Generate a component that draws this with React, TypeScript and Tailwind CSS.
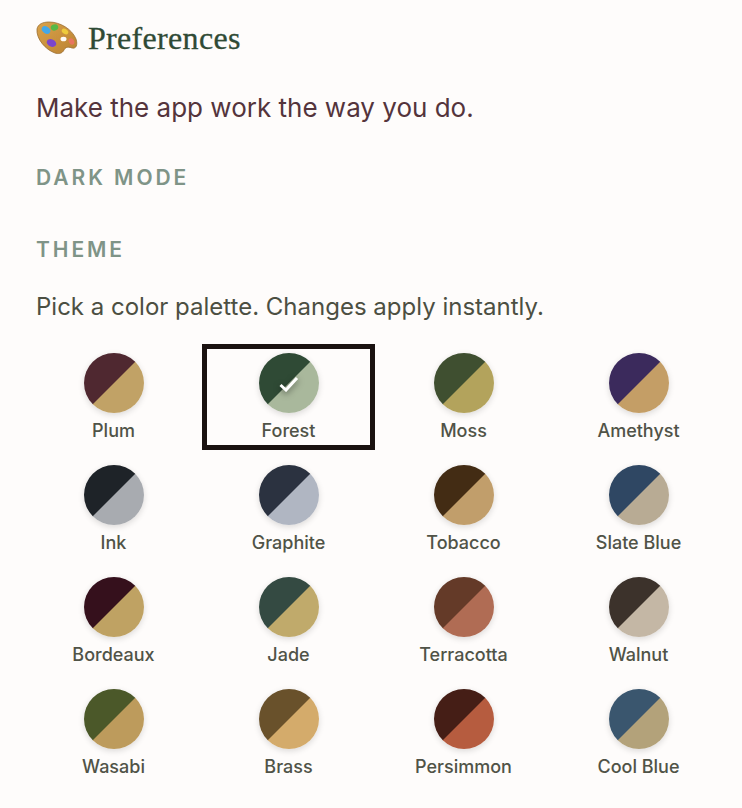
const themes = [
  { name: "Plum", swatch: "bg-[linear-gradient(135deg,#4f2830_49.6%,#c1a266_50.4%)]" },
  { name: "Forest", swatch: "bg-[linear-gradient(135deg,#2f4a35_49.6%,#a9b89c_50.4%)]", selected: true },
  { name: "Moss", swatch: "bg-[linear-gradient(135deg,#3f4f30_49.6%,#b3a35c_50.4%)]" },
  { name: "Amethyst", swatch: "bg-[linear-gradient(135deg,#3b2a5c_49.6%,#c49e66_50.4%)]" },
  { name: "Ink", swatch: "bg-[linear-gradient(135deg,#1e2328_49.6%,#a8abb0_50.4%)]" },
  { name: "Graphite", swatch: "bg-[linear-gradient(135deg,#2b3240_49.6%,#b0b6c2_50.4%)]" },
  { name: "Tobacco", swatch: "bg-[linear-gradient(135deg,#432c14_49.6%,#c19e6b_50.4%)]" },
  { name: "Slate Blue", swatch: "bg-[linear-gradient(135deg,#2f4763_49.6%,#b8ab94_50.4%)]" },
  { name: "Bordeaux", swatch: "bg-[linear-gradient(135deg,#35101c_49.6%,#bfa263_50.4%)]" },
  { name: "Jade", swatch: "bg-[linear-gradient(135deg,#344a42_49.6%,#c0aa6b_50.4%)]" },
  { name: "Terracotta", swatch: "bg-[linear-gradient(135deg,#643a28_49.6%,#b06c54_50.4%)]" },
  { name: "Walnut", swatch: "bg-[linear-gradient(135deg,#3c322b_49.6%,#c4b7a5_50.4%)]" },
  { name: "Wasabi", swatch: "bg-[linear-gradient(135deg,#4b5829_49.6%,#bd9b5c_50.4%)]" },
  { name: "Brass", swatch: "bg-[linear-gradient(135deg,#69512b_49.6%,#d4ab6b_50.4%)]" },
  { name: "Persimmon", swatch: "bg-[linear-gradient(135deg,#451e16_49.6%,#b65c3f_50.4%)]" },
  { name: "Cool Blue", swatch: "bg-[linear-gradient(135deg,#3a566e_49.6%,#b3a27a_50.4%)]" },
]

function PaletteIcon() {
  return (
    <svg width="42" height="34" viewBox="0 0 42 34" className="shrink-0">
      <defs>
        <linearGradient id="wood" x1="0" y1="0" x2="1" y2="1">
          <stop offset="0" stopColor="#d9a24a" />
          <stop offset="1" stopColor="#bb8232" />
        </linearGradient>
      </defs>
      <path
        d="M1 8C2 3 7 1 13 1C24 1 36 8 40 18C42 24 40 28 36 27C31 25 29 27 28 29C26 33 22 33 19 32C10 29 0 18 1 8z"
        fill="url(#wood)"
        stroke="#9a6f34"
        strokeWidth="0.8"
      />
      <ellipse cx="10" cy="9" rx="4.6" ry="3.4" fill="#43a8e8" transform="rotate(35 10 9)" />
      <ellipse cx="18.5" cy="6.5" rx="3.8" ry="3" fill="#57b947" transform="rotate(-15 18.5 6.5)" />
      <ellipse cx="29" cy="10.5" rx="3.6" ry="2.4" fill="#eecb3d" transform="rotate(35 29 10.5)" />
      <ellipse cx="35.5" cy="20.5" rx="2.6" ry="3.4" fill="#e9755f" transform="rotate(-30 35.5 20.5)" />
      <ellipse cx="15.5" cy="22" rx="5" ry="3.6" fill="#7b46cc" transform="rotate(25 15.5 22)" />
      <ellipse cx="27.5" cy="18" rx="3" ry="2.3" fill="#fefcfb" />
    </svg>
  )
}

export default function App() {
  return (
    <div className="min-h-[808px] bg-[#fefcfb] font-['Inter',sans-serif]">
      <div className="flex items-center gap-[10px] pl-[36px] pt-[20px]">
        <PaletteIcon />
        <h1 className="font-['Liberation_Serif',serif] text-[32px] leading-[36px] tracking-[0.01em] text-[#2f4a35] [-webkit-text-stroke:0.3px_#2f4a35]">
          Preferences
        </h1>
      </div>

      <p className="mt-[36px] pl-[36px] text-[26px] leading-[32px] text-[#54343c]">Make the app work the way you do.</p>

      <h2 className="mt-[40px] pl-[36px] text-[21px] leading-[28px] font-semibold tracking-[0.14em] text-[#7f9487]">
        DARK MODE
      </h2>
      <h2 className="mt-[44px] pl-[36px] text-[21px] leading-[28px] font-semibold tracking-[0.14em] text-[#7f9487]">
        THEME
      </h2>

      <p className="mt-[28px] pl-[36px] text-[24px] leading-[30px] text-[#4c4f42]">
        Pick a color palette. Changes apply instantly.
      </p>

      <div className="mt-[22px] ml-[27px] grid w-[700px] grid-cols-4 gap-y-[6px]">
        {themes.map((t) => (
          <button
            key={t.name}
            className={
              "flex h-[106px] w-[173px] flex-col items-center " +
              (t.selected ? "border-[5px] border-[#1a1210] pt-[4px]" : "pt-[9px]")
            }
          >
            <span
              className={
                "relative flex h-[60px] w-[60px] items-center justify-center rounded-full shadow-[0_2px_6px_rgba(0,0,0,0.14)] " +
                t.swatch
              }
            >
              {t.selected && (
                <svg width="22" height="18" viewBox="0 0 22 18" className="drop-shadow-[0_2px_3px_rgba(0,0,0,0.5)]">
                  <path d="M2.5 11L8 16L19 4" fill="none" stroke="#fff" strokeWidth="3" />
                </svg>
              )}
            </span>
            <span className="mt-[6px] text-[18px] leading-[24px] font-medium text-[#505347]">{t.name}</span>
          </button>
        ))}
      </div>
    </div>
  )
}
